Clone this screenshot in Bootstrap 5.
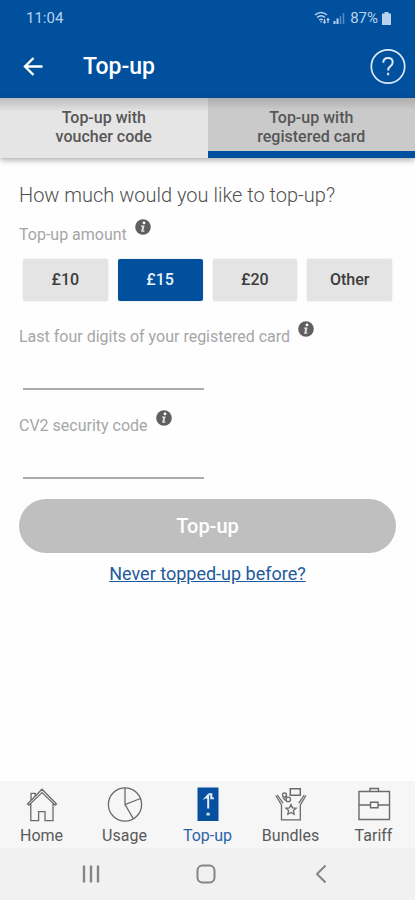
<!DOCTYPE html>
<html lang="en">
<head>
<meta charset="utf-8">
<meta name="viewport" content="width=device-width, initial-scale=1">
<title>Top-up</title>
<link href="https://cdn.jsdelivr.net/npm/bootstrap@5.3.0/dist/css/bootstrap.min.css" rel="stylesheet">
<style>
  :root { --brand: #00509e; }
  body { font-family: Roboto, "Liberation Sans", sans-serif; background: #fefefe; color: #6b6b6b; }
  svg { display: block; flex: none; }
  .brand-bar { background: var(--brand); color: #fff; }
  .status-row { height: 36px; padding: 0 24px 0 26px; font-size: 15px; color: #b9d2ee; }
  .title-row { height: 62px; padding: 0 9px 0 20px; }
  .title-row h1 { font-size: 23px; line-height: 28px; font-weight: 500; padding-left: 37px; }
  .plain-btn { background: none; border: 0; padding: 0; color: inherit; }
  .help-btn { width: 36px; height: 36px; }
  .mode-tabs { height: 60px; box-shadow: 0 2px 6px #0005; }
  .mode-tab { border: 0; padding: 0 0 3px; font-size: 16px; line-height: 19px; font-weight: 500; color: #565656;
    background: linear-gradient(#bdbdbd, #e5e5e5 14px); }
  .mode-tab.active { background: linear-gradient(#adadad, #cacaca 12px); box-shadow: inset 0 -7px var(--brand); }
  .form-area { padding: 25px 19px 0; }
  .form-area h2 { font-size: 20px; line-height: 24px; font-weight: 300; color: #505050; margin-bottom: 12px; }
  .field-name { font-size: 16px; line-height: 20px; color: #a6a6a6; }
  .field-head { height: 26px; }
  .field-gap { margin-top: 20px; }
  .amounts { padding: 14px 4px 0; gap: 10px; }
  .amount { flex: 1 1 0; height: 42px; padding: 0; border: 0; border-radius: 2px; background: #e4e4e4; color: #3c3c3c;
    font-size: 16px; font-weight: 500; box-shadow: 0 0 2px #0002; }
  .amount.active { background: var(--brand); color: #e8f1fb; }
  .line-input { width: 48%; height: 43px; margin-left: 4px; padding: 6px 0; border: 0; border-bottom: 2px solid #adadad;
    background: transparent; color: #555; border-radius: 0; }
  .submit-btn { height: 54px; font-size: 20px; font-weight: 500; background: #bfbfbf; color: #fff; border: 0; }
  .help-row { padding-top: 10px; }
  .help-link { font-size: 18px; line-height: 22px; color: #1f5a9c; }
  .tab-bar { background: #f6f6f6; height: 67px; padding-top: 5px; }
  .tab-bar a { width: 20%; color: #5a5a5a; font-size: 16px; line-height: 24px; }
  .tab-bar a.active { color: #2b64a8; }
  .system-bar { background: #f1f1f1; height: 52px; padding-right: 3px; color: #858585; }
  .system-bar button { width: 28%; height: 52px; }
</style>
<script src="https://cdn.jsdelivr.net/npm/bootstrap@5.3.0/dist/js/bootstrap.bundle.min.js"></script>
</head>
<body class="d-flex flex-column min-vh-100">
<svg width="0" height="0" class="position-absolute" aria-hidden="true">
  <symbol id="info" viewBox="0 0 16 16">
    <circle cx="8" cy="8" r="7.8" fill="#5f5f5f"/>
    <circle cx="9" cy="3.9" r="1.4" fill="#fff"/>
    <path d="M6.1 6.4h3.5L8.3 11.5h1.2l-.3 1.2H6.1l1.2-5H5.9z" fill="#e4e4e4"/>
  </symbol>
</svg>

<header class="brand-bar">
  <div class="status-row d-flex align-items-center justify-content-between">
    <span>11:04</span>
    <span class="d-flex align-items-center">
      <svg width="32" height="14" viewBox="0 0 32 14" fill="none" stroke="currentColor" stroke-width="1.5">
        <path d="M1 4Q7-1 13 4M3 6.5Q7 3 11 6.5M5.2 9Q7 7.5 8.8 9" /><path d="M7 10v1.6M10.5 8v4M9.3 10.6l1.2 1.4 1.2-1.4M14 12V7.6M12.8 9L14 7.6 15.200 9" stroke-width="1.2"/>
        <path d="M20.500 13V10M23.500 13V7.500" stroke-width="2"/><path d="M26.500 13V5M29.500 13V2" stroke-width="1.5" opacity=".45"/>
      </svg>
      <span class="ms-1 me-1">87%</span>
      <svg width="9" height="13" viewBox="0 0 9 13" fill="currentColor"><path d="M2.500 0h4v1.500H9V13H0V1.500h2.500z"/></svg>
    </span>
  </div>
  <div class="title-row d-flex align-items-center">
    <button class="plain-btn" type="button" aria-label="Back">
      <svg width="26" height="26" viewBox="0 0 26 26" fill="none" stroke="#fff" stroke-width="2.400"><path d="M22.500 12.500H5M13.500 4L5 12.500l8.500 8.500"/></svg>
    </button>
    <h1 class="mb-0 me-auto">Top-up</h1>
    <button class="plain-btn help-btn" type="button" aria-label="Help">
      <svg width="36" height="36" viewBox="0 0 36 36" fill="none" stroke="#dbe8f6" stroke-width="1.700"><circle cx="18" cy="17.500" r="16.700"/><path d="M13.300 13.700c0-2.800 2-4.600 4.700-4.600s4.700 1.600 4.700 4.200c0 2.300-1.300 3.200-2.700 4.300-1.300 1-1.900 1.800-1.900 3.900M18.100 23.800v2.400" stroke-width="2"/></svg>
    </button>
  </div>
</header>

<div class="mode-tabs d-flex" role="tablist">
  <button class="mode-tab w-50" type="button" role="tab" aria-selected="false">Top-up with<br>voucher code</button>
  <button class="mode-tab active w-50" type="button" role="tab" aria-selected="true">Top-up with<br>registered card</button>
</div>

<main class="form-area flex-grow-1">
  <h2>How much would you like to top-up?</h2>
  <div class="field-head d-flex align-items-end">
    <span class="field-name me-2" id="amount-name">Top-up amount</span>
    <button class="plain-btn mb-auto" type="button" aria-label="About the amount"><svg width="16" height="16"><use href="#info"/></svg></button>
  </div>
  <div class="amounts d-flex" role="group" aria-labelledby="amount-name">
    <button class="amount" type="button">£10</button>
    <button class="amount active" type="button" aria-pressed="true">£15</button>
    <button class="amount" type="button">£20</button>
    <button class="amount" type="button">Other</button>
  </div>
  <div class="field-head field-gap d-flex align-items-end">
    <label class="field-name me-2" for="digits">Last four digits of your registered card</label>
    <button class="plain-btn mb-auto" type="button" aria-label="About card digits"><svg width="16" height="16"><use href="#info"/></svg></button>
  </div>
  <input class="line-input d-block" id="digits" type="text" inputmode="numeric" maxlength="4">
  <div class="field-head field-gap d-flex align-items-end">
    <label class="field-name me-2" for="cv2">CV2 security code</label>
    <button class="plain-btn mb-auto" type="button" aria-label="About the security code"><svg width="16" height="16"><use href="#info"/></svg></button>
  </div>
  <input class="line-input d-block" id="cv2" type="text" inputmode="numeric" maxlength="3">
  <button class="submit-btn field-gap w-100 rounded-pill" type="submit">Top-up</button>
  <div class="help-row text-center"><a class="help-link" href="#">Never topped-up before?</a></div>
</main>

<nav class="tab-bar d-flex" aria-label="Main">
  <a class="d-flex flex-column align-items-center text-decoration-none" href="#">
    <svg width="36" height="38" viewBox="0 0 36 38" fill="none" stroke="#6b6b6b" stroke-width="1.300"><path d="M3.500 18L18 3.300 32.500 18l-1.400 1.200L18 6.600 4.900 19.200zM6.800 17.500v17.200h7.800v-9h6.400v9h8V17.500M7 14V7.300h4.200v2.500M7 7.300h4.800"/></svg>
    <span>Home</span>
  </a>
  <a class="d-flex flex-column align-items-center text-decoration-none" href="#">
    <svg width="36" height="38" viewBox="0 0 36 38" fill="none" stroke="#6b6b6b" stroke-width="1.300"><circle cx="18" cy="18.500" r="16.600"/><path d="M18 2v16.500l15.500-6M18 18.500l8.300 14.200"/></svg>
    <span>Usage</span>
  </a>
  <a class="active d-flex flex-column align-items-center text-decoration-none" href="#" aria-current="page">
    <svg width="36" height="38" viewBox="0 0 36 38" fill="none"><path d="M7.500 1.500h21v33.500h-21z" fill="#07509f"/><path d="M12.500 14l6-6.800v5.300h-3z" fill="#e6f0fb"/><path d="M18.200 22.500V9M18.500 8.200h2.800v4h2.500" stroke="#e6f0fb" stroke-width="2"/><path d="M16.500 26.800h3.200v2.700h-3.200z" fill="#cfe1f4"/></svg>
    <span>Top-up</span>
  </a>
  <a class="d-flex flex-column align-items-center text-decoration-none" href="#">
    <svg width="36" height="38" viewBox="0 0 36 38" fill="none" stroke="#6b6b6b" stroke-width="1.300"><path d="M2.800 9.500L8.500 19v14.800h18.800V19l5.700-9.500M4.300 9l5.700 8.200M31.300 9l-5.500 8.200"/><path d="M17.300 2.800h10v6.400h-10z" stroke-width="1.500"/><circle cx="11.500" cy="9" r="2"/><circle cx="15.300" cy="13.400" r="2.200"/><path d="M9.800 11.500l3 3.300M13.500 8.500l-.5 3.500"/><path d="M18 18.500l1.500 3.300 3.600.4-2.700 2.400.8 3.700-3.200-1.900-3.200 1.900.8-3.700-2.700-2.400 3.600-.4z"/></svg>
    <span>Bundles</span>
  </a>
  <a class="d-flex flex-column align-items-center text-decoration-none" href="#">
    <svg width="36" height="38" viewBox="0 0 36 38" fill="none" stroke="#6b6b6b" stroke-width="1.400"><path d="M3 5.500h30.500v28H3z"/><path d="M14 5.500V2.500h8.500v3M3 19h11.500M22 19h11.500"/><path d="M14.500 16.200h7.500v5.600h-7.500z"/></svg>
    <span>Tariff</span>
  </a>
</nav>
<div class="system-bar d-flex justify-content-center">
  <button class="plain-btn d-flex align-items-center justify-content-center" type="button" aria-label="Recent apps"><svg width="18" height="18" viewBox="0 0 18 18" stroke="currentColor" stroke-width="2.400"><path d="M2 .5v17M9 .5v17M16 .5v17"/></svg></button>
  <button class="plain-btn d-flex align-items-center justify-content-center" type="button" aria-label="Home screen"><svg width="20" height="20" viewBox="0 0 20 20" fill="none" stroke="currentColor" stroke-width="2"><rect x="1.500" y="1.500" width="17" height="17" rx="5"/></svg></button>
  <button class="plain-btn d-flex align-items-center justify-content-center" type="button" aria-label="Back"><svg width="12" height="20" viewBox="0 0 12 20" fill="none" stroke="currentColor" stroke-width="2"><path d="M10.500 1.500L2 10l8.500 8.500"/></svg></button>
</div>
</body>
</html>
